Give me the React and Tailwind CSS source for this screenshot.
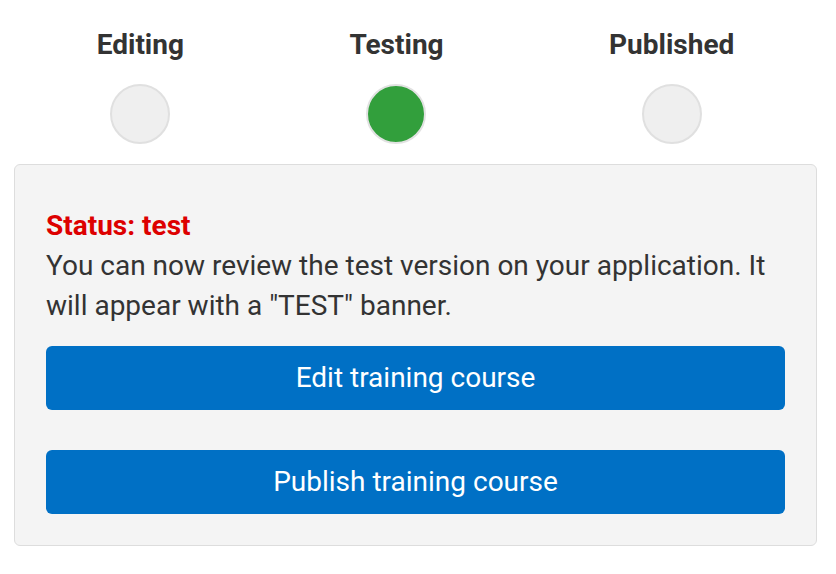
export default function App() {
  // Three workflow stages, current one highlighted
  const steps = [
    { label: 'Editing', active: false },
    { label: 'Testing', active: true },
    { label: 'Published', active: false },
  ];

  return (
    <div className="bg-white min-h-screen w-[836px] h-[574px] pl-[14px] pr-[19px] pt-[29px] text-[#333] font-['Roboto',sans-serif]">
      {/* Stepper */}
      <div className="flex justify-around">
        {steps.map((step) => (
          <div key={step.label} className="flex flex-col items-center">
            <div className="text-[28px] leading-8 font-bold text-[#333]">{step.label}</div>
            <div
              className={`mt-[23px] w-[60px] h-[60px] rounded-full border-2 ${
                step.active ? 'bg-[#329f3c] border-[#e2e2e2]' : 'bg-[#efefef] border-[#e0e0e0]'
              }`}
            />
          </div>
        ))}
      </div>

      {/* Status card */}
      <div className="mt-5 bg-[#f4f4f4] border border-[#dddddd] rounded-md px-[31px] pt-[41px] pb-[31px]">
        <div className="text-[28px] leading-10 font-bold text-[#dd0000]">Status: test</div>
        <p className="text-[28px] leading-10 text-[#333]">
          You can now review the test version on your application. It will appear with a "TEST" banner.
        </p>
        <div className="mt-5 flex flex-col gap-10">
          <button className="h-16 w-full rounded-md bg-[#0070c5] text-white text-[28px]">
            Edit training course
          </button>
          <button className="h-16 w-full rounded-md bg-[#0070c5] text-white text-[28px]">
            Publish training course
          </button>
        </div>
      </div>
    </div>
  );
}
